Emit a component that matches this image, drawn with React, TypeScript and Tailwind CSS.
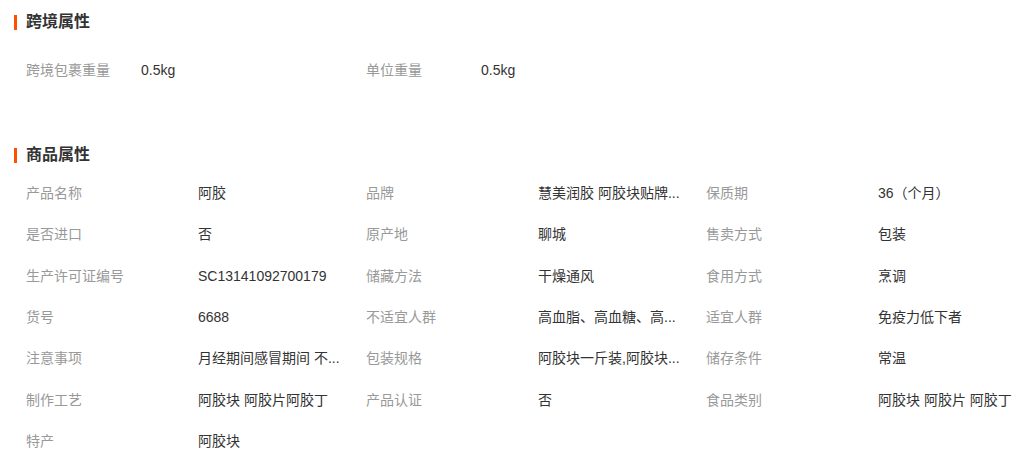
import React from 'react';

const font = { fontFamily: '"Liberation Sans", "Noto Sans CJK SC", sans-serif' };

const crossBorder = [
  { label: '跨境包裹重量', value: '0.5kg' },
  { label: '单位重量', value: '0.5kg' },
];

// values shown as they appear, already shortened
const attrs = [
  ['产品名称', '阿胶'],
  ['品牌', '慧美润胶 阿胶块贴牌...'],
  ['保质期', '36（个月）'],
  ['是否进口', '否'],
  ['原产地', '聊城'],
  ['售卖方式', '包装'],
  ['生产许可证编号', 'SC13141092700179'],
  ['储藏方法', '干燥通风'],
  ['食用方式', '烹调'],
  ['货号', '6688'],
  ['不适宜人群', '高血脂、高血糖、高...'],
  ['适宜人群', '免疫力低下者'],
  ['注意事项', '月经期间感冒期间 不...'],
  ['包装规格', '阿胶块一斤装,阿胶块...'],
  ['储存条件', '常温'],
  ['制作工艺', '阿胶块 阿胶片阿胶丁'],
  ['产品认证', '否'],
  ['食品类别', '阿胶块 阿胶片 阿胶丁'],
  ['特产', '阿胶块'],
];

const Heading = ({ title, className }: { title: string; className: string }) => (
  <div className={`flex items-center pl-[14px] ${className}`}>
    <span className="w-[3px] h-[15px] bg-[#ff5000] mr-[9px]"></span>
    <span className="text-[16px] font-bold text-[#333]">{title}</span>
  </div>
);

export default function App() {
  return (
    <div className="w-[1021px] h-[468px] bg-white overflow-hidden" style={font}>
      {/* 跨境属性 */}
      <Heading title="跨境属性" className="h-[44px]" />
      <div className="flex pl-[26px] mt-[4px]">
        {crossBorder.map((item) => (
          <div key={item.label} className="w-[340px] h-[44px] flex items-center text-[14px]">
            <span className="w-[115px] text-[#999]">{item.label}</span>
            <span className="text-[#333]">{item.value}</span>
          </div>
        ))}
      </div>

      {/* 商品属性 */}
      <Heading title="商品属性" className="h-[36px] mt-[45px]" />
      <div className="grid grid-cols-[340px_340px_340px] pl-[26px]">
        {attrs.map(([label, value]) => (
          <div key={label} className="h-[41.33px] flex items-center text-[14px]">
            <span className="w-[172px] shrink-0 text-[#999]">{label}</span>
            <span className="whitespace-nowrap text-[#333]">{value}</span>
          </div>
        ))}
      </div>
    </div>
  );
}
